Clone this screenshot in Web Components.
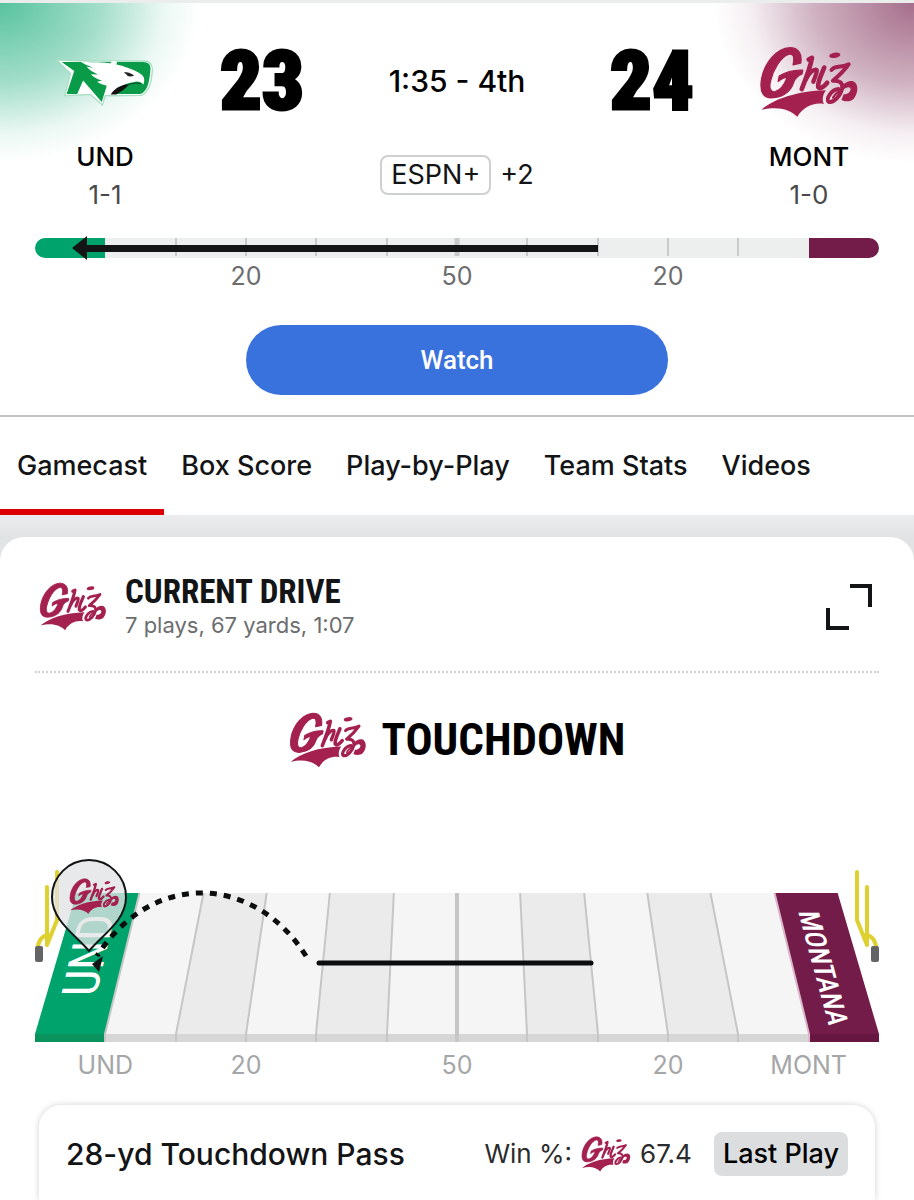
<!DOCTYPE html>
<html lang="en">
<head>
<meta charset="utf-8">
<meta name="viewport" content="width=device-width, initial-scale=1">
<title>UND 23 - MONT 24 | Gamecast</title>
<style>
  :root{ --ink:#121416; --muted:#6c6d6f; --soft:#a5a6a7; --griz:#a4204f; --red:#d00;
    --ui:Inter,'Noto Sans',sans-serif; --narrow:'Liberation Sans Narrow','Roboto Condensed',Roboto,sans-serif; }
  html,body{ margin:0; height:100%; }
  body{ background:#fff; color:var(--ink); font-family:var(--ui); font-size:26px; line-height:32px; overflow-x:hidden; }
</style>
</head>
<body>
<game-page>
  <game-header slot="header">
    <team-badge slot="away" abbr="UND" record="1-1"><hawk-logo></hawk-logo></team-badge>
    <span slot="away-score">23</span>
    <span slot="clock">1:35 - 4th</span>
    <span slot="home-score">24</span>
    <team-badge slot="home" abbr="MONT" record="1-0"><griz-logo></griz-logo></team-badge>
    <drive-bar slot="field"></drive-bar>
  </game-header>
  <game-tabs slot="tabs" active="Gamecast"></game-tabs>
  <drive-card>
    <griz-logo slot="logo"></griz-logo>
    <span slot="title">CURRENT DRIVE</span>
    <span slot="detail">7 plays, 67 yards, 1:07</span>
    <play-result>TOUCHDOWN</play-result>
    <play-field></play-field>
    <last-play win="67.4">28-yd Touchdown Pass</last-play>
  </drive-card>
</game-page>

<script>
(function(){
  function define(name, css, html){
    customElements.define(name, class extends HTMLElement{
      connectedCallback(){
        if(this.shadowRoot) return;
        var root = this.attachShadow({mode:'open'});
        root.innerHTML = '<style>*{box-sizing:border-box}'+css+'</style>'+(typeof html==='function' ? html(this) : html);
      }
    });
  }

  /* ---------- logos ---------- */
  define('griz-logo', `
    :host{ display:block; width:100px; }
    svg{ display:block; width:100%; height:auto; }
    .s{ fill:none; stroke:var(--griz); stroke-linecap:round; stroke-linejoin:round; }
    .f{ fill:var(--griz); }
    .g{ stroke:var(--griz); stroke-width:4; stroke-linejoin:round; }`, `
    <svg viewBox="62 74 302 218" role="img" aria-label="Montana Grizzlies">
      <path class="f g" d="M165 131L188 126C193 96 180 79 155 79C115 81 79 125 70 172C62 218 78 233 106 230C136 227 158 211 167 183C170 173 174 166 192 158L194 147C171 146 143 152 123 165L120 181C131 172 139 169 147 169C139 190 128 207 111 212C95 215 92 199 97 179C105 145 127 107 151 99C166 95 170 107 165 131Z"/>
      <path class="s" stroke-width="14" d="M212 115L222 110C217 140 204 172 191 204"/>
      <path class="s" stroke-width="13" d="M203 176C212 155 228 142 236 146C240 150 232 164 226 182"/>
      <path class="s" stroke-width="14" d="M259 139C252 158 238 182 241 198C247 206 259 196 268 185"/>
      <ellipse class="f" cx="291" cy="102" rx="17" ry="8" transform="rotate(-9 291 102)"/>
      <path class="s" stroke-width="12" d="M281 146C291 133 305 141 333 129C320 148 301 166 285 179C304 178 316 184 313 202C308 225 288 246 273 243C263 236 278 207 302 204"/>
      <path class="s" stroke-width="7" d="M286 230C291 221 299 212 308 211"/>
      <path class="f" d="M309 198C321 182 343 174 353 185C364 198 359 220 348 233C338 243 321 242 311 237L318 219C327 222 337 216 339 205C336 195 326 198 316 207Z"/>
      <path class="f" d="M69 267C105 235 178 210 264 208C255 221 251 236 258 249C228 243 194 258 178 288C155 265 119 255 69 267Z"/>
    </svg>`);

  define('hawk-logo', `
    :host{ display:block; width:98px; }
    svg{ display:block; width:100%; height:auto; }`, `
    <svg viewBox="176 168 296 146" role="img" aria-label="North Dakota Fighting Hawks">
      <path d="M178 174L256 177L349 177L440 177C461 178 468 188 467 207C464 241 459 268 434 281L340 282L325 281L316 310L280 278L202 282L220 215Z" fill="#fff" stroke="#a9dfc4" stroke-width="4"/>
      <path d="M193 180L342 180L328 256L314 301L258 236L240 277L208 277L231 207Z" fill="#0a9b48"/>
      <path d="M360 180L438 180C459 181 463 191 461 207C457 243 453 267 431 277L344 277Z" fill="#0a9b48"/>
      <path d="M344 177L358 177L355 194L343 191Z" fill="#fff"/>
      <path d="M248 177C277 184 307 178 338 184C367 188 409 200 436 219C445 228 443 239 440 248C433 240 421 237 410 241C382 245 362 256 344 278L326 278L333 253C319 249 307 246 300 240L315 236C301 233 289 225 281 217L303 218C289 212 275 204 268 194L289 198C270 190 257 185 248 177Z" fill="#fff"/>
      <path d="M341 278C353 258 374 248 397 247C387 259 372 270 358 278Z" fill="#111"/>
      <path d="M381 212C391 209 403 214 412 221C402 226 391 224 389 218Z" fill="#222"/>
      <path d="M396 248C409 244 421 242 432 246" fill="none" stroke="#111" stroke-width="2"/>
    </svg>`);

  /* ---------- page shell ---------- */
  define('game-page', `
    :host{ display:flex; flex-direction:column; min-height:100%; background:#e6e7e9; }
    main{ flex:1; display:flex; flex-direction:column; padding-top:22px;
      background:linear-gradient(#ebecee, #e2e3e5 22px); }
    ::slotted(drive-card){ flex:1; }`, `
    <slot name="header"></slot><slot name="tabs"></slot>
    <main><slot></slot></main>`);

  /* ---------- scoreboard ---------- */
  define('game-header', `
    :host{ display:block; border-top:3px solid #ebecec; border-bottom:2px solid #c4c5c7; padding:0 35px 20px;
      background:
        radial-gradient(200px 160px at 0 0, rgba(0,163,108,.66), rgba(0,163,108,.36) 50%, rgba(0,163,108,.08) 82%, rgba(0,163,108,0)) no-repeat,
        radial-gradient(200px 160px at 100% 0, rgba(115,28,73,.64), rgba(115,28,73,.34) 50%, rgba(115,28,73,.07) 82%, rgba(115,28,73,0)) no-repeat,
        #fff; }
    .score{ display:grid; grid-template-columns:140px 174px 1fr 174px 140px; align-items:start; justify-items:center; padding-top:38px; height:233px; }
    .num{ font:900 82px/80px 'Roboto Condensed',Roboto,sans-serif; color:#000; -webkit-text-stroke:3px #000; }
    .mid{ display:flex; flex-direction:column; align-items:center; gap:58px; padding-top:24px; white-space:nowrap; }
    .clock{ font-size:30px; font-weight:500; color:#000; }
    .tv{ display:flex; align-items:center; gap:9px; font-size:27px; }
    .tv b{ font-weight:400; border:2px solid #cfd0d1; border-radius:8px; padding:1px 9px; line-height:34px; }
    button{ display:block; width:50%; height:70px; margin:33px auto 0; border:0; border-radius:35px;
      background:#3a72dd; color:#fff; font:500 26px/32px Roboto,sans-serif; cursor:pointer; }`, `
    <div class="score">
      <slot name="away"></slot>
      <div class="num"><slot name="away-score"></slot></div>
      <div class="mid"><div class="clock"><slot name="clock"></slot></div>
        <div class="tv"><b>ESPN+</b><span>+2</span></div></div>
      <div class="num"><slot name="home-score"></slot></div>
      <slot name="home"></slot>
    </div>
    <slot name="field"></slot>
    <button type="button">Watch</button>`);

  define('team-badge', `
    :host{ display:flex; flex-direction:column; align-items:center; }
    .logo{ height:82px; display:flex; align-items:center; }
    .abbr{ font-weight:500; color:#000; margin-top:18px; }
    .rec{ color:#48494a; margin-top:6px; }`, function(el){ return `
    <div class="logo"><slot></slot></div>
    <div class="abbr">${el.getAttribute('abbr')}</div>
    <div class="rec">${el.getAttribute('record')}</div>`; });

  /* twelve ten-yard columns, end zones included */
  var AXIS = `
    .axis{ display:grid; grid-template-columns:repeat(12,1fr); text-align:center; line-height:32px; }
    .axis span:nth-of-type(1){ grid-column:1/3; }
    .axis span:nth-of-type(2){ grid-column:3/5; }
    .axis span:nth-of-type(3){ grid-column:6/8; }
    .axis span:nth-of-type(4){ grid-column:9/11; }
    .axis span:nth-of-type(5){ grid-column:11/13; }`;

  define('drive-bar', `
    :host{ display:block; color:var(--muted); }
    svg{ display:block; width:100%; height:auto; }
    .axis{ font-size:25px; }`+AXIS, function(){
    var ticks = '';
    for(var i=2;i<11;i++){
      var x = Math.round(i*844/12), w = i===6 ? 5 : 2;
      ticks += '<rect x="'+(x-w/2)+'" y="2" width="'+w+'" height="18" fill="#c8c9ca"/>';
    }
    return `
    <svg viewBox="0 0 844 24" aria-hidden="true">
      <rect x="70" y="2" width="704" height="20" fill="#edeeee"/>
      <path d="M70 2H10a10 10 0 0 0 0 20H70z" fill="#00a36c"/>
      <path d="M774 2h60a10 10 0 0 1 0 20h-60z" fill="#731c49"/>
      ${ticks}
      <path d="M52 9H563V16H52V24L37 12L52 0z" fill="#121416"/>
    </svg>
    <div class="axis"><span></span><span>20</span><span>50</span><span>20</span></div>`; });

  /* ---------- tabs ---------- */
  define('game-tabs', `
    :host{ display:block; background:#fff; }
    nav{ display:flex; overflow:hidden; }
    a{ padding:33px 17px 27px; border-bottom:6px solid transparent; font-size:27px; font-weight:500; color:var(--ink);
      text-decoration:none; white-space:nowrap; }
    a[aria-current]{ border-color:var(--red); }`, function(el){
    return '<nav>'+['Gamecast','Box Score','Play-by-Play','Team Stats','Videos'].map(function(t){
      return '<a href="#"'+(t===el.getAttribute('active') ? ' aria-current="page"' : '')+'>'+t+'</a>';
    }).join('')+'</nav>'; });

  /* ---------- current drive ---------- */
  define('drive-card', `
    :host{ display:flex; flex-direction:column; background:#fff; border-radius:24px 24px 0 0; padding:0 35px; }
    header{ display:flex; align-items:center; gap:18px; padding:37px 4px 31px; border-bottom:2px dotted #cfd0d1; }
    ::slotted(griz-logo){ width:68px; }
    .text{ flex:1; }
    h2{ margin:0; font:700 33px/36px var(--narrow); }
    p{ margin:0; font-size:22px; line-height:30px; color:var(--muted); }
    button{ border:0; background:none; padding:0; margin-right:2px; cursor:pointer; }
    svg{ display:block; width:48px; height:48px; fill:none; stroke:#121416; stroke-width:4; }`, `
    <header><slot name="logo"></slot>
      <div class="text"><h2><slot name="title"></slot></h2><p><slot name="detail"></slot></p></div>
      <button type="button" aria-label="Expand"><svg viewBox="0 0 48 48"><path d="M25 3H45V24M3 25V45H24"/></svg></button>
    </header>
    <slot></slot>`);

  define('play-result', `
    :host{ display:flex; align-items:center; justify-content:center; gap:15px; padding:39px 0 0; }
    griz-logo{ width:78px; }
    strong{ font:700 45px/56px var(--narrow); color:#000; }`, `
    <griz-logo></griz-logo><strong><slot></slot></strong>`);

  define('play-field', `
    :host{ display:block; color:var(--soft); padding-top:87px; }
    .pic{ position:relative; }
    svg{ display:block; width:100%; height:auto; overflow:visible; }
    .pin{ position:absolute; left:4%; top:12%; width:6%; }
    .axis{ font-size:25px; padding-top:4px; }
    text{ font-family:var(--narrow); fill:#fff; }`+AXIS, function(){
    var mid = 422, top = 38, bot = 179, s = '';
    function bx(i){ return Math.round(i*844/12); }
    function tx(i){ return mid+(bx(i)-mid)*0.902; }
    function quad(i, fill){
      return '<path d="M'+tx(i)+' '+top+'H'+tx(i+1)+'L'+bx(i+1)+' '+bot+'H'+bx(i)+'z" fill="'+fill+'"/>';
    }
    for(var i=0;i<12;i++){
      var fill = i===0 ? '#00a36c' : i===11 ? '#731c49' : [2,4,7,9].indexOf(i)>-1 ? '#ebebeb' : '#f5f5f5';
      s += quad(i, fill);
    }
    s += '<path d="M0 179H70V187H0z" fill="#0a925f"/><path d="M70 179H774V187H70z" fill="#d6d6d6"/><path d="M774 179H844V187H774z" fill="#661640"/>';
    for(i=1;i<12;i++){
      s += '<path d="M'+tx(i)+' '+top+'L'+bx(i)+' '+bot+'V187" fill="none" stroke="'+(i===11 ? '#dcb6cb' : '#c6c6c7')+'" stroke-width="'+(i===6 ? 4 : 2)+'"/>';
    }
    var post = '<path d="M822 17V65L832 90V32M829 80Q839 80 841 91" fill="none" stroke="#ddd02f" stroke-width="4" stroke-linecap="round" stroke-linejoin="round"/><rect x="836" y="91" width="8" height="16" rx="2" fill="#636466"/>';
    return `
    <div class="pic">
      <svg viewBox="0 0 844 190" role="img" aria-label="28-yard touchdown pass to the UND end zone">
        ${s}
        ${post}<g transform="matrix(-1 0 0 1 844 0)">${post}</g>
        <text transform="translate(61 141) rotate(-77) skewX(13)" font-size="48">UND</text>
        <text transform="translate(763 56) rotate(75) skewX(-15)" font-size="28" font-weight="500">MONTANA</text>
        <path d="M284 108H556" stroke="#0c0d0e" stroke-width="5" stroke-linecap="round"/>
        <path d="M271 101C220 20 118 14 62 101" fill="none" stroke="#0c0d0e" stroke-width="5" stroke-dasharray="7 7"/>
        <path d="M57 109L68 101L64 117z" fill="#121416"/>
        <path d="M54 96C41 80 17 66 17 42A37 37 0 0 1 91 42C91 66 67 80 54 96z" fill="#e1e3e4" fill-opacity=".78" stroke="#121416" stroke-width="2"/>
      </svg>
      <griz-logo class="pin"></griz-logo>
    </div>
    <div class="axis"><span>UND</span><span>20</span><span>50</span><span>20</span><span>MONT</span></div>`; });

  define('last-play', `
    :host{ flex:1; display:block; margin:24px 4px 0; padding:27px 27px 24px; border-radius:22px 22px 0 0;
      box-shadow:0 0 6px rgba(0,0,0,.18); }
    .row{ display:flex; align-items:center; gap:22px; white-space:nowrap; }
    h3{ flex:1; margin:0; font-size:30px; line-height:36px; font-weight:500; }
    .win{ display:flex; align-items:center; gap:9px; color:#2b2c2d; font-size:26px; }
    griz-logo{ width:50px; }
    button{ border:0; border-radius:8px; padding:6px 9px; background:#dcdddf; color:#000; font:500 27px/32px var(--ui); cursor:pointer; }`,
    function(el){ return `
    <div class="row"><h3><slot></slot></h3>
      <div class="win"><span>Win %:</span><griz-logo></griz-logo><span>${el.getAttribute('win')}</span></div>
      <button type="button">Last Play</button></div>`; });
})();
</script>
</body>
</html>
